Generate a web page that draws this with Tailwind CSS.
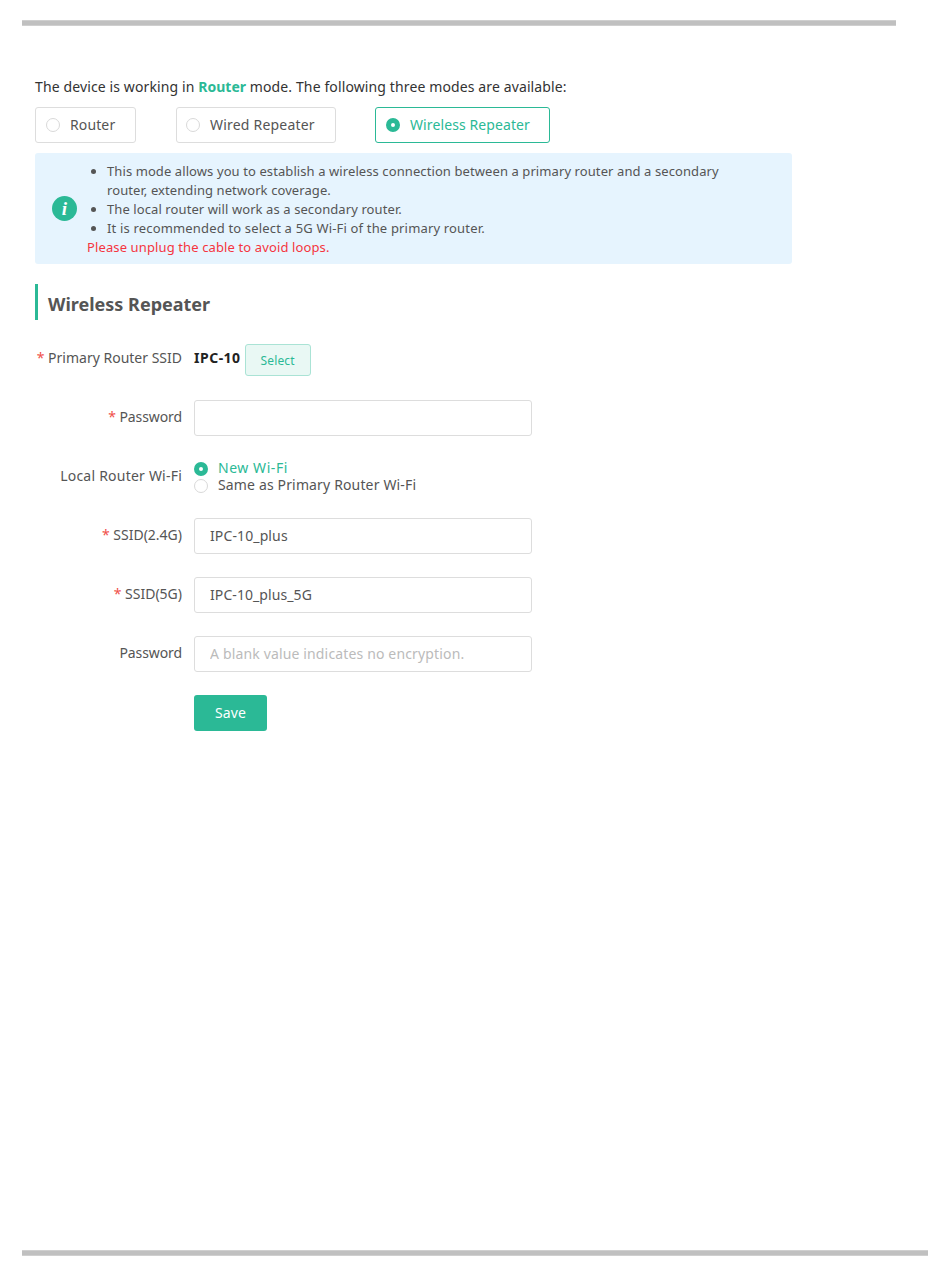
<!DOCTYPE html>
<html>
<head>
    <title>Work Mode</title>
    <meta charset="UTF-8">
    <meta name="viewport" content="width=device-width, initial-scale=1">
    <script src="https://cdn.jsdelivr.net/npm/@tailwindcss/browser@4"></script>
</head>
<body class="bg-white">
<div class="h-[1276px] flex flex-col pt-[20px] pl-[22px] font-['Noto_Sans',sans-serif] text-[14px] tracking-[0.12px] text-[#555]">
    <div class="w-[874px] h-[6px] bg-[#c0c0c0] border-y border-[#cfcfcf]"></div>

    <div class="w-[757px] ml-[13px] mt-[49px] grow">
        <p class="h-[24px] leading-[24px] text-[#333]">The device is working in <b class="tracking-normal text-[#2bb996]">Router</b> mode. The following three modes are available:</p>

        <!-- mode picker -->
        <div class="flex mt-[8px]">
            <div class="w-[101px] h-[36px] flex items-center pl-[10px] border border-[#ddd] rounded-[3px]">
                <span class="w-[14px] h-[14px] rounded-full border border-[#d9d9d9]"></span>
                <span class="ml-[10px] pb-[2px]">Router</span>
            </div>
            <div class="w-[160px] h-[36px] ml-[40px] flex items-center pl-[9px] border border-[#ddd] rounded-[3px]">
                <span class="w-[14px] h-[14px] rounded-full border border-[#d9d9d9]"></span>
                <span class="ml-[10px] pb-[2px] tracking-[0.2px]">Wired Repeater</span>
            </div>
            <div class="w-[175px] h-[36px] ml-[39px] flex items-center pl-[10px] border border-[#2bb996] rounded-[3px] text-[#2bb996]">
                <span class="w-[14px] h-[14px] rounded-full border-[5px] border-[#2bb996]"></span>
                <span class="ml-[10px] pb-[2px] tracking-[0.1px]">Wireless Repeater</span>
            </div>
        </div>

        <!-- notice -->
        <div class="flex items-center h-[111px] mt-[10px] pl-[17px] bg-[#e6f4fe] rounded-[3px] text-[13px] leading-[19px]">
            <svg class="w-[25px] h-[25px] shrink-0" viewBox="0 0 25 25">
                <circle cx="12.5" cy="12.5" r="12.5" fill="#2bb996"/>
                <text x="12.5" y="19" text-anchor="middle" fill="#fff" font-family="Liberation Serif" font-size="19" font-weight="bold" font-style="italic">i</text>
            </svg>
            <div class="ml-[10px] w-[640px] pt-[2px]">
                <ul class="list-disc pl-[20px] tracking-[0.09px]">
                    <li>This mode allows you to establish a wireless connection between a primary router and a secondary router, extending network coverage.</li>
                    <li>The local router will work as a secondary router.</li>
                    <li class="tracking-[0.17px]">It is recommended to select a 5G Wi-Fi of the primary router.</li>
                </ul>
                <p class="text-[#f5343f]">Please unplug the cable to avoid loops.</p>
            </div>
        </div>

        <h2 class="h-[36px] mt-[20px] pl-[10px] border-l-[3px] border-[#2bb996] text-[18px] tracking-normal leading-[41px] font-bold">Wireless Repeater</h2>

        <!-- form -->
        <div class="flex items-center h-[32px] mt-[24px]">
            <label class="w-[147px] pb-[6px] text-right tracking-normal"><span class="text-[#f0504a]">*</span> Primary Router SSID</label>
            <b class="ml-[12px] pb-[6px] tracking-[0.5px] text-[#222]">IPC-10</b>
            <button class="w-[66px] h-[32px] ml-[4px] pt-[2px] bg-[#e9f8f4] border border-[#aae3d5] rounded-[3px] text-[12px] text-[#2bb996]">Select</button>
        </div>

        <div class="flex items-center h-[36px] mt-[24px]">
            <label class="w-[147px] pb-[4px] text-right tracking-[-0.1px]"><span class="text-[#f0504a]">*</span> Password</label>
            <input type="text" class="w-[338px] h-[36px] ml-[12px] px-[15px] border border-[#ddd] rounded-[3px] outline-none">
        </div>

        <div class="flex items-center h-[36px] mt-[23px]">
            <label class="w-[147px] pb-[4px] text-right tracking-[0.22px]">Local Router Wi-Fi</label>
            <div class="ml-[12px] leading-[17px]">
                <div class="flex items-center h-[17px] text-[#2bb996]">
                    <span class="w-[14px] h-[14px] rounded-full border-[5px] border-[#2bb996]"></span>
                    <span class="ml-[10px] pb-[2px] tracking-[0.55px]">New Wi-Fi</span>
                </div>
                <div class="flex items-center h-[17px]">
                    <span class="w-[14px] h-[14px] rounded-full border border-[#d9d9d9]"></span>
                    <span class="ml-[10px] pb-[2px] tracking-[0.15px]">Same as Primary Router Wi-Fi</span>
                </div>
            </div>
        </div>

        <div class="flex items-center h-[36px] mt-[23px]">
            <label class="w-[147px] pb-[4px] text-right tracking-normal"><span class="text-[#f0504a]">*</span> SSID(2.4G)</label>
            <input type="text" value="IPC-10_plus" class="w-[338px] h-[36px] ml-[12px] pl-[15px] pr-[15px] pb-[2px] border border-[#ddd] rounded-[3px] outline-none">
        </div>

        <div class="flex items-center h-[36px] mt-[23px]">
            <label class="w-[147px] pb-[4px] text-right tracking-normal"><span class="text-[#f0504a]">*</span> SSID(5G)</label>
            <input type="text" value="IPC-10_plus_5G" class="w-[338px] h-[36px] ml-[12px] pl-[15px] pr-[15px] pb-[2px] border border-[#ddd] rounded-[3px] outline-none tracking-[0.08px]">
        </div>

        <div class="flex items-center h-[36px] mt-[23px]">
            <label class="w-[147px] pb-[4px] text-right tracking-[-0.1px]">Password</label>
            <input type="text" placeholder="A blank value indicates no encryption." class="w-[338px] h-[36px] ml-[12px] pl-[15px] pr-[15px] pb-[2px] border border-[#ddd] rounded-[3px] outline-none tracking-[0.15px] placeholder:text-[#bbb]">
        </div>

        <button class="block w-[73px] h-[36px] ml-[159px] mt-[23px] pb-[2px] bg-[#2bb996] rounded-[3px] text-white">Save</button>
    </div>

    <div class="w-[906px] h-[6px] mb-[20px] bg-[#c0c0c0] border-y border-[#cfcfcf]"></div>
</div>
</body>
</html>
